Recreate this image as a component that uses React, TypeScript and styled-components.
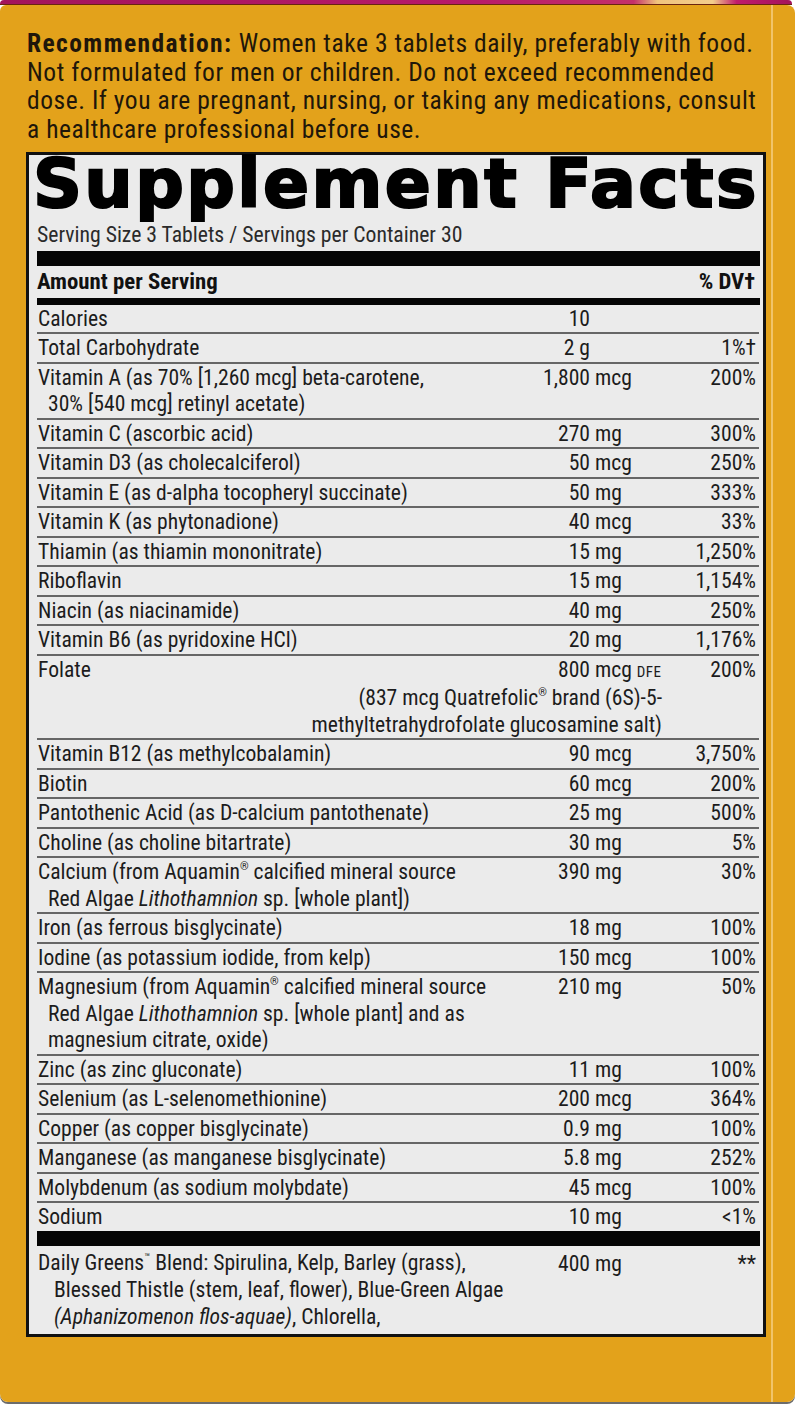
import React from 'react';
import styled, { createGlobalStyle } from 'styled-components';

const Global = createGlobalStyle`
  html, body { margin: 0; padding: 0; background: #ffffff; }
  body {
    width: 800px;
    height: 1408px;
    overflow: hidden;
    font-family: "Roboto Condensed", "Liberation Sans Narrow", "DejaVu Sans Condensed", "Liberation Sans", Arial, sans-serif;
  }
`;

const ORANGE = '#E3A21B';

const Page = styled.div`
  width: 800px;
  height: 1408px;
  display: flex;
  flex-direction: column;
  background: #ffffff;
`;

const TopEdge = styled.div`
  width: 792px;
  height: 4px;
  border-radius: 4px 4px 0 0;
  background: linear-gradient(
    to right,
    #a3145c 0%,
    #b81a6a 60%,
    #c4306a 80%,
    #f0c47e 83%,
    #f3cd8c 90%,
    #c01c6c 93%,
    #a3145c 100%
  );
  border-bottom: 1.5px solid #6a2410;
`;

const Card = styled.div`
  width: 795px;
  height: 1397px;
  border-radius: 6px 8px 8px 8px;
  background: linear-gradient(
    to right,
    ${ORANGE} 0,
    ${ORANGE} 771px,
    #f1c46a 771px,
    #f1c46a 773px,
    ${ORANGE} 773px
  );
  box-shadow: 0 2px 0 #6c6c6c;
  display: flex;
  flex-direction: column;
  padding: 24px 0 0 27px;
  box-sizing: border-box;
`;

const Recommendation = styled.p`
  margin: 0;
  width: 745px;
  font-size: 25.5px;
  line-height: 28.7px;
  letter-spacing: 0.55px;
  color: #20160a;
  white-space: nowrap;
`;

const Strong = styled.strong`
  font-weight: 700;
  letter-spacing: 1.4px;
`;

const Panel = styled.section`
  margin: 8px 0 0 -1px;
  width: 740px;
  box-sizing: border-box;
  border: 3.5px solid #111;
  background: #ebebeb;
  padding: 0 4px 0 8px;
  color: #1c1c1c;
  display: flex;
  flex-direction: column;
`;

const Title = styled.h1`
  margin: 0 0 0 -4px;
  font-family: "DejaVu Sans", "Liberation Sans", sans-serif;
  font-weight: 700;
  font-size: 68px;
  line-height: 58px;
  letter-spacing: 2.4px;
  color: #000;
  -webkit-text-stroke: 2.1px #000;
  white-space: nowrap;
`;

const Serving = styled.div`
  margin-top: 9px;
  font-size: 21.7px;
  line-height: 26px;
  color: #2a2a2a;
`;

const Bar = styled.div<{ $h: number; $top?: number }>`
  height: ${(p) => p.$h}px;
  margin-top: ${(p) => p.$top ?? 0}px;
  background: #050505;
  margin-right: -1px;
`;

const COLS = 'minmax(0, 1fr) 67px 74px 95px';

const Grid = styled.div`
  display: grid;
  grid-template-columns: ${COLS};
  font-size: 21.6px;
  line-height: 26.5px;
`;

const Row = styled.div`
  display: contents;
`;

const Cell = styled.div<{ $last?: boolean }>`
  padding-top: 1px;
  border-bottom: ${(p) => (p.$last ? '0' : '2px solid #666')};
`;

const NameCell = styled(Cell)`
  padding-left: 1px;
`;

const Line = styled.div<{ $indent?: number }>`
  padding-left: ${(p) => p.$indent ?? 0}px;
  white-space: nowrap;
`;

const NumCell = styled(Cell)`
  text-align: right;
  white-space: nowrap;
`;

const UnitCell = styled(Cell)`
  padding-left: 5px;
  white-space: nowrap;
`;

const DvCell = styled(Cell)`
  text-align: right;
  padding-right: 3px;
  white-space: nowrap;
`;

const HeadCell = styled.div<{ $right?: boolean }>`
  font-weight: 700;
  font-size: 22.8px;
  line-height: 32px;
  height: 32px;
  text-align: ${(p) => (p.$right ? 'right' : 'left')};
  padding: ${(p) => (p.$right ? '0 4px 0 0' : '0 0 0 0')};
`;

const HeadRow = styled.div`
  display: flex;
  justify-content: space-between;
  color: #111;
`;

const Small = styled.span`
  font-size: 15px;
  letter-spacing: 0.4px;
`;

const Sup = styled.sup`
  font-size: 11px;
  line-height: 0;
  vertical-align: 9px;
`;

const Note = styled.div`
  grid-column: 1 / 4;
  text-align: right;
  padding-right: 2px;
  border-bottom: 2px solid #666;
`;

const Greens = styled.div`
  display: grid;
  grid-template-columns: ${COLS};
  font-size: 21.6px;
  line-height: 27px;
  padding: 3px 0 4px;
`;

const GreensName = styled.div`
  padding-left: 1px;
`;

type R = {
  name: React.ReactNode[];
  num: string;
  unit?: React.ReactNode;
  dv?: string;
  note?: string[];
};

const Reg = () => <Sup>®</Sup>;
const Lith = () => <i>Lithothamnion</i>;

const rows: R[] = [
  { name: ['Calories'], num: '10' },
  { name: ['Total Carbohydrate'], num: '2 g', dv: '1%†' },
  {
    name: ['Vitamin A (as 70% [1,260 mcg] beta-carotene,', '30% [540 mcg] retinyl acetate)'],
    num: '1,800',
    unit: 'mcg',
    dv: '200%',
  },
  { name: ['Vitamin C (ascorbic acid)'], num: '270', unit: 'mg', dv: '300%' },
  { name: ['Vitamin D3 (as cholecalciferol)'], num: '50', unit: 'mcg', dv: '250%' },
  { name: ['Vitamin E (as d-alpha tocopheryl succinate)'], num: '50', unit: 'mg', dv: '333%' },
  { name: ['Vitamin K (as phytonadione)'], num: '40', unit: 'mcg', dv: '33%' },
  { name: ['Thiamin (as thiamin mononitrate)'], num: '15', unit: 'mg', dv: '1,250%' },
  { name: ['Riboflavin'], num: '15', unit: 'mg', dv: '1,154%' },
  { name: ['Niacin (as niacinamide)'], num: '40', unit: 'mg', dv: '250%' },
  { name: ['Vitamin B6 (as pyridoxine HCl)'], num: '20', unit: 'mg', dv: '1,176%' },
  {
    name: ['Folate'],
    num: '800',
    unit: (
      <>
        mcg <Small>DFE</Small>
      </>
    ),
    dv: '200%',
    note: ['(837 mcg Quatrefolic® brand (6S)-5-', 'methyltetrahydrofolate glucosamine salt)'],
  },
  { name: ['Vitamin B12 (as methylcobalamin)'], num: '90', unit: 'mcg', dv: '3,750%' },
  { name: ['Biotin'], num: '60', unit: 'mcg', dv: '200%' },
  { name: ['Pantothenic Acid (as D-calcium pantothenate)'], num: '25', unit: 'mg', dv: '500%' },
  { name: ['Choline (as choline bitartrate)'], num: '30', unit: 'mg', dv: '5%' },
  {
    name: [
      <>
        Calcium (from Aquamin<Reg /> calcified mineral source
      </>,
      <>
        Red Algae <Lith /> sp. [whole plant])
      </>,
    ],
    num: '390',
    unit: 'mg',
    dv: '30%',
  },
  { name: ['Iron (as ferrous bisglycinate)'], num: '18', unit: 'mg', dv: '100%' },
  { name: ['Iodine (as potassium iodide, from kelp)'], num: '150', unit: 'mcg', dv: '100%' },
  {
    name: [
      <>
        Magnesium (from Aquamin<Reg /> calcified mineral source
      </>,
      <>
        Red Algae <Lith /> sp. [whole plant] and as
      </>,
      'magnesium citrate, oxide)',
    ],
    num: '210',
    unit: 'mg',
    dv: '50%',
  },
  { name: ['Zinc (as zinc gluconate)'], num: '11', unit: 'mg', dv: '100%' },
  { name: ['Selenium (as L-selenomethionine)'], num: '200', unit: 'mcg', dv: '364%' },
  { name: ['Copper (as copper bisglycinate)'], num: '0.9', unit: 'mg', dv: '100%' },
  { name: ['Manganese (as manganese bisglycinate)'], num: '5.8', unit: 'mg', dv: '252%' },
  { name: ['Molybdenum (as sodium molybdate)'], num: '45', unit: 'mcg', dv: '100%' },
  { name: ['Sodium'], num: '10', unit: 'mg', dv: '<1%' },
];

function renderNote(text: string) {
  const parts = text.split('®');
  if (parts.length === 1) return text;
  return (
    <>
      {parts[0]}
      <Reg />
      {parts[1]}
    </>
  );
}

export default function App() {
  return (
    <>
      <Global />
      <Page>
        <TopEdge />
        <Card>
          <Recommendation>
            <Strong>Recommendation:</Strong> Women take 3 tablets daily, preferably with food.
            <br />
            Not formulated for men or children. Do not exceed recommended
            <br />
            dose. If you are pregnant, nursing, or taking any medications, consult
            <br />
            a healthcare professional before use.
          </Recommendation>
          <Panel>
            <Title>Supplement Facts</Title>
            <Serving>Serving Size 3 Tablets / Servings per Container 30</Serving>
            <Bar $h={15} $top={3} />
            <HeadRow>
              <HeadCell>Amount per Serving</HeadCell>
              <HeadCell $right>% DV†</HeadCell>
            </HeadRow>
            <Bar $h={7} />
            <Grid>
              {rows.map((r, i) => {
                const last = i === rows.length - 1;
                const hasNote = !!r.note;
                const cellLast = last || hasNote;
                return (
                  <Row key={i}>
                    <NameCell $last={cellLast}>
                      {r.name.map((n, j) => (
                        <Line key={j} $indent={j > 0 ? 10 : 0}>
                          {n}
                        </Line>
                      ))}
                    </NameCell>
                    <NumCell $last={cellLast}>{r.num}</NumCell>
                    <UnitCell $last={cellLast}>{r.unit}</UnitCell>
                    <DvCell $last={cellLast}>{r.dv}</DvCell>
                    {r.note && (
                      <>
                        <Note>
                          {r.note.map((n, j) => (
                            <Line key={j}>{renderNote(n)}</Line>
                          ))}
                        </Note>
                        <Cell />
                      </>
                    )}
                  </Row>
                );
              })}
            </Grid>
            <Bar $h={15} />
            <Greens>
              <GreensName>
                <Line>
                  Daily Greens<Sup>™</Sup> Blend: Spirulina, Kelp, Barley (grass),
                </Line>
                <Line $indent={16}>Blessed Thistle (stem, leaf, flower), Blue-Green Algae</Line>
                <Line $indent={16}>
                  <i>(Aphanizomenon flos-aquae)</i>, Chlorella,
                </Line>
              </GreensName>
              <NumCell $last>400</NumCell>
              <UnitCell $last>mg</UnitCell>
              <DvCell $last>**</DvCell>
            </Greens>
          </Panel>
        </Card>
      </Page>
    </>
  );
}
